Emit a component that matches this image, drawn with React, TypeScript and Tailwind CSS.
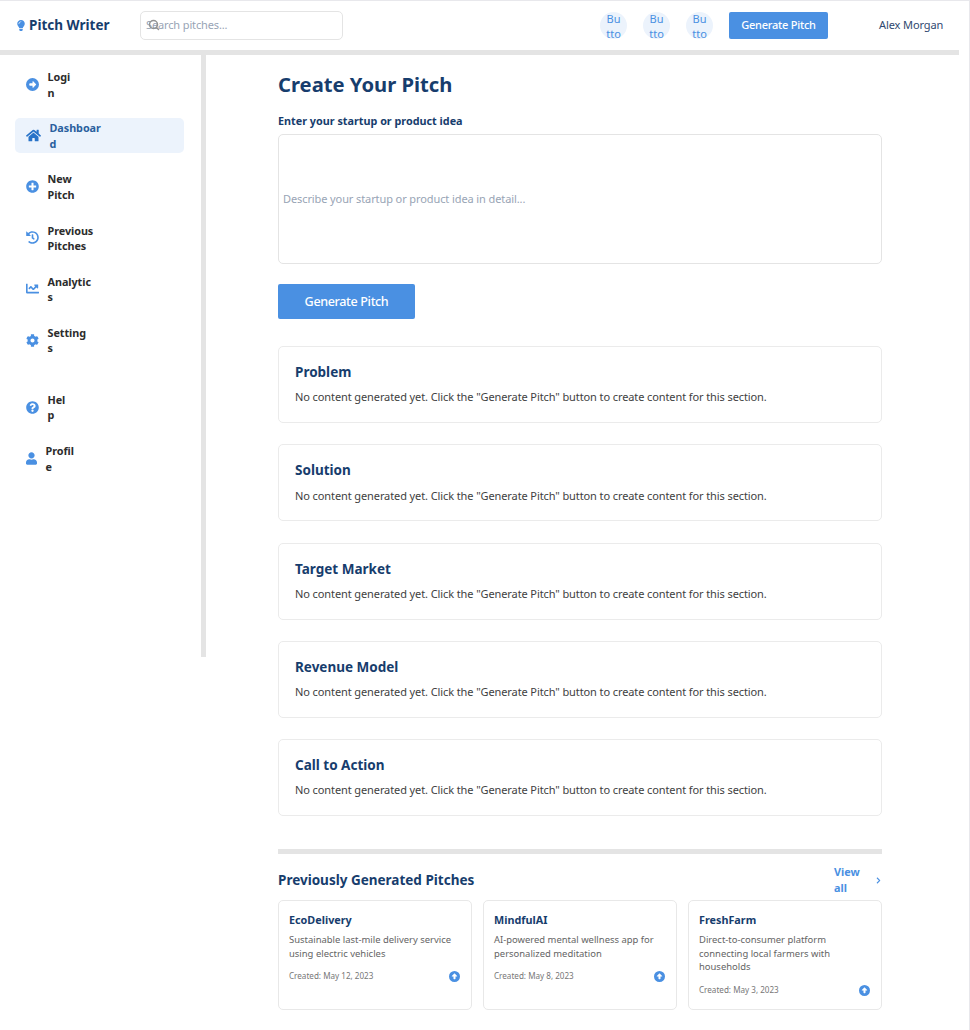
import React from "react";
import {
  FaLightbulb,
  FaHome,
  FaPlusCircle,
  FaHistory,
  FaChartLine,
  FaCog,
  FaQuestionCircle,
  FaUser,
  FaChevronRight,
} from "react-icons/fa";
import { FaCircleRight, FaCircleUp } from "react-icons/fa6";
import { FiSearch } from "react-icons/fi";
import type { IconType } from "react-icons";

type NavEntry = { icon: IconType; lines: string[]; size: string; spacing: string; active?: boolean };

const nav: NavEntry[] = [
  { icon: FaCircleRight, lines: ["Logi", "n"], size: "w-[13px]", spacing: "mt-[12px]" },
  { icon: FaHome, lines: ["Dashboar", "d"], size: "w-[15px]", spacing: "mt-[16px]", active: true },
  { icon: FaPlusCircle, lines: ["New", "Pitch"], size: "w-[13px]", spacing: "mt-[16px]" },
  { icon: FaHistory, lines: ["Previous", "Pitches"], size: "w-[13px]", spacing: "mt-[16.3px]" },
  { icon: FaChartLine, lines: ["Analytic", "s"], size: "w-[13px]", spacing: "mt-[16px]" },
  { icon: FaCog, lines: ["Setting", "s"], size: "w-[13px]", spacing: "mt-[16.5px]" },
  { icon: FaQuestionCircle, lines: ["Hel", "p"], size: "w-[13px]", spacing: "mt-[32px]" },
  { icon: FaUser, lines: ["Profil", "e"], size: "w-[11px]", spacing: "mt-[16.3px]" },
];

const sections = ["Problem", "Solution", "Target Market", "Revenue Model", "Call to Action"];

const pitches = [
  { name: "EcoDelivery", lines: ["Sustainable last-mile delivery service", "using electric vehicles"], date: "May 12, 2023" },
  { name: "MindfulAI", lines: ["AI-powered mental wellness app for", "personalized meditation"], date: "May 8, 2023" },
  { name: "FreshFarm", lines: ["Direct-to-consumer platform", "connecting local farmers with", "households"], date: "May 3, 2023" },
];

function NavItem({ icon: Icon, lines, size, spacing, active }: NavEntry) {
  return (
    <a
      className={`flex h-[35px] w-[169px] items-center gap-[8.5px] rounded-[5px] pl-[11px] text-[10.8px] leading-[15.3px] font-bold ${spacing} ${
        active ? "bg-[#ecf3fc] text-[#2a5f9e]" : "text-[#2c2c2c]"
      }`}
    >
      <Icon className={`h-[15px] shrink-0 ${size} ${active ? "text-[#2873c8]" : "text-[#4a90e2]"}`} />
      <span className="tracking-[-0.05px]">
        {lines.map((line) => (
          <span key={line} className="block">{line}</span>
        ))}
      </span>
    </a>
  );
}

function Header() {
  return (
    <header className="flex h-[54px] w-[959px] items-center border-b-[5px] border-[#e4e4e4] whitespace-nowrap">
      <div className="ml-[16px] flex w-[124px] items-center gap-[3px]">
        <FaLightbulb className="h-[11px] w-[10px] text-[#4a90e2]" />
        <span className="text-[13.5px] font-bold text-[#173d6d]">Pitch Writer</span>
      </div>
      <div className="relative flex h-[29px] w-[203px] items-center rounded-[5px] border border-[#e4e4e4] pl-[5px] text-[11px] tracking-[-0.13px] text-[#98a4b5]">
        Search pitches...
        <FiSearch className="absolute top-[7px] left-[7px] h-[12px] w-[12px] text-[#929292]" strokeWidth={3} />
      </div>
      <div className="ml-[257px] flex gap-[16px]">
        {[0, 1, 2].map((i) => (
          <button
            key={i}
            className="h-[27px] w-[27px] rounded-full bg-[#ecf3fc] text-center text-[11px] leading-[15.2px] text-[#4a90e2]"
          >
            <span className="-mt-px block">Bu<br />tto</span>
          </button>
        ))}
      </div>
      <button className="ml-[16px] h-[27px] w-[99px] rounded-[2px] bg-[#4a90e2] text-[11px] font-medium tracking-[-0.23px] text-white">
        Generate Pitch
      </button>
      <span className="ml-[51px] text-[11px] tracking-[-0.1px] text-[#30496f]">Alex Morgan</span>
    </header>
  );
}

export default function App() {
  return (
    <div className="h-[1030px] w-[970px] overflow-hidden border-t border-r border-[#e8e8ec] bg-white font-['Noto_Sans',sans-serif]">
      <Header />
      <div className="flex items-start">
        <aside className="flex h-[602px] w-[206px] flex-col border-r-[5px] border-[#e4e4e4] pl-[15px]">
          {nav.map((item) => (
            <NavItem key={item.lines.join("")} {...item} />
          ))}
        </aside>
        <main className="ml-[72px] w-[604px] whitespace-nowrap text-[#173d6d]">
          <h1 className="mt-[15px] h-[29px] text-[20.2px] leading-[29px] font-bold">Create Your Pitch</h1>
          <label className="mt-[14px] block h-[16px] text-[10.8px] leading-[16px] font-bold">
            Enter your startup or product idea
          </label>
          <div className="mt-[5px] flex h-[130px] items-center rounded-[5px] border border-[#e4e4e4] pl-[4px] text-[11px] tracking-[-0.1px] text-[#98a4b5]">
            Describe your startup or product idea in detail...
          </div>
          <button className="mt-[20px] block h-[35px] w-[137px] rounded-[2px] bg-[#4a90e2] pt-[2px] text-[12.6px] font-medium tracking-[-0.38px] text-white">
            Generate Pitch
          </button>
          <div className="mt-[27px] flex flex-col gap-[21.3px]">
            {sections.map((title) => (
              <section key={title} className="h-[77px] rounded-[5px] border border-[#ebebeb] px-[16px] pt-[15px]">
                <h2 className="h-[20px] text-[13.5px] leading-[20px] font-bold">{title}</h2>
                <p className="mt-[7.3px] text-[11px] leading-[16px] tracking-[-0.1px] text-[#414141]">
                  No content generated yet. Click the "Generate Pitch" button to create content for this section.
                </p>
              </section>
            ))}
          </div>
          <div className="mt-[32.5px] flex h-[51.5px] items-center justify-between border-t-[5px] border-[#e4e4e4] pt-[6.5px]">
            <h2 className="text-[13.5px] font-bold">Previously Generated Pitches</h2>
            <a className="flex w-[48px] items-center justify-between text-[10.8px] leading-[15.8px] font-bold text-[#4a90e2]">
              <span>View<br />all</span>
              <FaChevronRight className="h-[7px] w-[7px]" />
            </a>
          </div>
          <div className="grid grid-cols-3 gap-[11px]">
            {pitches.map((pitch) => (
              <article key={pitch.name} className="h-[109.5px] rounded-[5px] border border-[#e8e8e8] px-[10px] pt-[11px]">
                <h3 className="h-[16px] text-[10.8px] leading-[16px] font-bold">{pitch.name}</h3>
                <p className="mt-[5px] text-[9.45px] leading-[13.6px] text-[#646464]">
                  {pitch.lines.map((line) => (
                    <span key={line} className="block">{line}</span>
                  ))}
                </p>
                <div className="mt-[9.7px] flex h-[13px] items-center justify-between text-[8.1px] text-[#777777]">
                  <span>Created: {pitch.date}</span>
                  <FaCircleUp className="mr-px h-[11px] w-[11px] text-[#4a90e2]" />
                </div>
              </article>
            ))}
          </div>
        </main>
      </div>
    </div>
  );
}
